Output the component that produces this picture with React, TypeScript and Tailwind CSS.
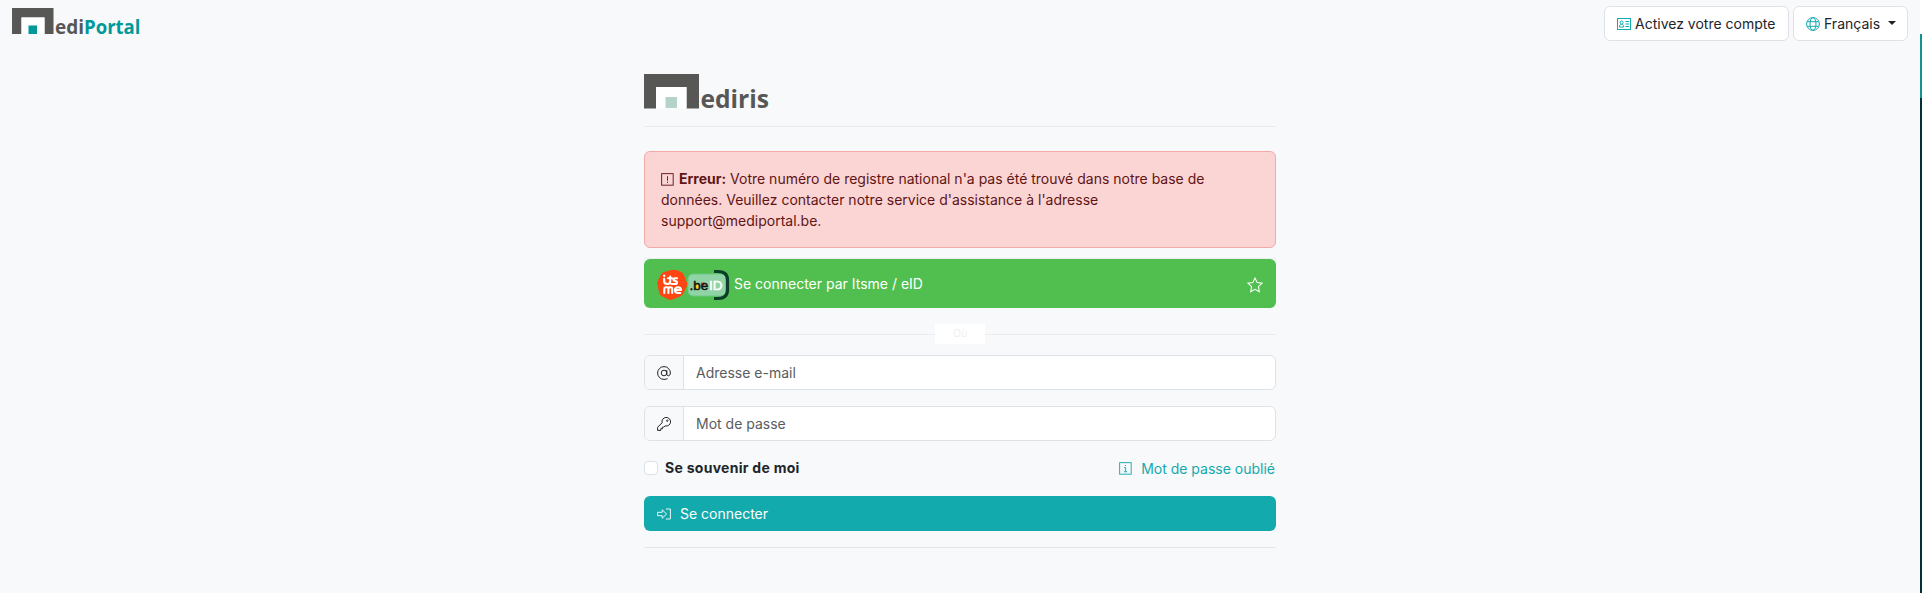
import type { ReactNode } from "react";

function Icon({ size = 14, className = "", children }: { size?: number; className?: string; children: ReactNode }) {
  return (
    <svg
      width={size}
      height={size}
      viewBox="0 0 14 14"
      fill="none"
      stroke="currentColor"
      strokeWidth="1"
      className={`shrink-0 ${className}`}
    >
      {children}
    </svg>
  );
}

function Navbar() {
  return (
    <header className="flex justify-between pl-3 pr-3 pt-1.5 h-[41px]">
      {/* Brand */}
      <svg width="130" height="32" viewBox="0 0 130 32" className="mt-0.5">
        <path d="M0 0H41.5V26H32.5V9.5H9.5V26H0Z" fill="#575756" />
        <path d="M9.5 9.5H32.5V26H9.5Z" fill="#fff" />
        <rect x="16.5" y="17.5" width="8.5" height="8.5" fill="#009999" />
        <g fontFamily="'Open Sans', 'Noto Sans', sans-serif" fontWeight="700" fontSize="18.8">
          <text x="43" y="26" fill="#575756" textLength="29" lengthAdjust="spacingAndGlyphs">
            edi
          </text>
          <text x="72" y="26" fill="#009999" textLength="56.5" lengthAdjust="spacingAndGlyphs">
            Portal
          </text>
        </g>
      </svg>

      <div className="flex gap-1">
        <button className="flex items-center h-[35px] w-[185px] pl-3 rounded-md border border-[#dee2e6] bg-white whitespace-nowrap">
          <Icon className="text-[#13aaad] mr-1">
            <rect x="0.5" y="1.5" width="13" height="11" />
            <path d="M2.5 10V8.7C2.5 8 3.3 7.5 4.5 7.5S6.7 8 6.7 8.7V10Z" />
            <circle cx="4.6" cy="5.5" r="1.5" />
            <path d="M8.5 4.5H12M8.5 7H12M8.5 9.5H12" />
          </Icon>
          Activez votre compte
        </button>
        <button className="flex items-center h-[35px] w-[115px] pl-3 rounded-md border border-[#dee2e6] bg-white whitespace-nowrap">
          <Icon className="text-[#13aaad] mr-1">
            <circle cx="7" cy="7" r="6.4" />
            <ellipse cx="7" cy="7" rx="3" ry="6.4" />
            <path d="M1.2 4.7H12.8M1.2 9.3H12.8" />
          </Icon>
          Français
          <span className="ml-2 -mt-0.5 border-x-4 border-t-4 border-x-transparent border-t-[#212529]" />
        </button>
      </div>
    </header>
  );
}

// Logos of the two identity providers
function ProviderLogos() {
  return (
    <svg width="75" height="32" viewBox="0 0 75 32" className="shrink-0 mr-0.5">
      <path
        d="M13 1.3Q17 0 20.5 1.3L25 3.6Q27 4.8 27.8 8L30 14Q30.8 16 29.5 18L26 25Q24.8 27 22 28L15.5 30.6Q13 31.4 10.5 30L4.5 27Q2.6 26 2 23L.3 15.5Q0 13 1.2 11L4 5.5Q5 3.5 8 2.8Z"
        fill="#ff4612"
      />
      <g stroke="#fff" strokeWidth="2.1" fill="none" strokeLinecap="round" strokeLinejoin="round">
        <path d="M7.2 9.8V12.5Q7.2 15 10.4 15Q13.2 15 13.2 12.5V7.5M11 9.3H15M20 9.2H18.2Q16.5 9.2 16.5 10.6Q16.5 12 18.3 12Q20 12 20 13.5Q20 15 18.2 15H14.5" />
        <path d="M7.3 24V20Q7.3 18.3 9 18.3H10Q11.4 18.3 11.4 20V24M11.4 20Q11.4 18.3 13 18.3Q15.2 18.3 15.2 20V24M18 21H24Q24 18.2 21 18.2Q18 18.2 18 21Q18 24 21 24H23.3" />
      </g>
      <circle cx="7.2" cy="6.8" r="1.2" fill="#fff" />

      <rect x="31" y="5" width="38" height="22" rx="5" fill="#8fd3a6" stroke="#6dc982" />
      <path d="M57 2.5H61Q70.5 2.5 70.5 11V21Q70.5 29.5 61 29.5H57" fill="none" stroke="#0b3d28" strokeWidth="3.2" />
      <rect x="37.5" y="14" width="4" height="6.5" fill="#ffd31a" />
      <rect x="44" y="13.5" width="3.5" height="3" fill="#e8342a" />
      <g fontFamily="'Liberation Sans', sans-serif" fontSize="13.5">
        <text x="32.5" y="21" fill="#111" stroke="#111" strokeWidth="0.5">
          .be
        </text>
        <text x="52" y="21" fill="#fff" stroke="#fff" strokeWidth="0.5">
          ID
        </text>
      </g>
    </svg>
  );
}

function Field({ icon, type, placeholder }: { icon: ReactNode; type: string; placeholder: string }) {
  return (
    <div className="flex h-[35px] mb-4 rounded-md border border-[#dee2e6] bg-white overflow-hidden">
      <span className="flex items-center justify-center w-[39px] border-r border-[#dee2e6] bg-[#f8f9fa]">
        {icon}
      </span>
      <input
        type={type}
        placeholder={placeholder}
        className="flex-1 px-3 outline-none placeholder:text-[#595c5f]"
      />
    </div>
  );
}

function LoginForm() {
  return (
    <main className="w-[632px] ml-[644px] pt-[33px]">
      <svg width="130" height="40" viewBox="0 0 130 40" className="block">
        <path d="M0 0H55V34.5H42.5V13H12V34.5H0Z" fill="#575756" />
        <path d="M12 13H42.5V34.5H12Z" fill="#fff" />
        <rect x="21.5" y="23" width="11.5" height="11" fill="#b5d3c9" />
        <text
          x="56.5"
          y="34.4"
          fontFamily="'Open Sans', 'Noto Sans', sans-serif"
          fontWeight="700"
          fontSize="25.5"
          fill="#575756"
          textLength="68.5"
          lengthAdjust="spacingAndGlyphs"
        >
          ediris
        </text>
      </svg>
      <hr className="mt-3 mb-6 border-[#ebecef]" />

      {/* Error message */}
      <div className="h-[97px] p-4 rounded-md border border-[#f4a9a9] bg-[#fbd4d4] text-[#5f1414]">
        <Icon size={13} className="inline-block mr-[5px] -mt-0.5">
          <rect x="0.7" y="0.7" width="12.4" height="12.4" />
          <path d="M7 3.5V8.3M7 9.5V10.8" />
        </Icon>
        <strong className="font-bold">Erreur:</strong> Votre numéro de registre national n'a pas été trouvé dans notre base de
        <br />
        données. Veuillez contacter notre service d'assistance à l'adresse
        <br />
        support@mediportal.be.
      </div>

      <hr className="mt-2.5 border-[#ebecef]" />
      <button className="flex items-center w-full h-[49px] px-[13px] pt-0.5 rounded-md bg-[#50bf50] text-white">
        <ProviderLogos />
        <span className="-mt-0.5">Se connecter par Itsme / eID</span>
        <Icon size={16} className="ml-auto">
          <path
            d="M7 .9L8.9 4.9L13.2 5.4L10 8.5L10.8 12.9L7 10.8L3.2 12.9L4 8.5L.8 5.4L5.1 4.9Z"
            strokeWidth="0.9"
          />
        </Icon>
      </button>

      {/* Separator */}
      <div className="flex items-center h-5 mt-4 mb-[11px]">
        <hr className="flex-1 border-[#ebecef]" />
        <span className="w-[50px] h-5 leading-5 text-center bg-white text-[10.5px] text-[#efefef]">Où</span>
        <hr className="flex-1 border-[#ebecef]" />
      </div>

      <Field
        type="email"
        placeholder="Adresse e-mail"
        icon={
          <Icon>
            <circle cx="7" cy="7" r="2.8" />
            <path d="M9.8 4V8.2Q9.8 9.8 11.5 9.8Q13.4 9.5 13.4 7A6.4 6.4 0 1 0 7 13.4Q9 13.4 10.5 12.6" />
          </Icon>
        }
      />
      <Field
        type="password"
        placeholder="Mot de passe"
        icon={
          <Icon>
            <path d="M5.1 5.8A4.3 4.3 0 1 1 8.2 8.9L6.8 10.1H5.4V11.7H3.8V13.4H.6V10.3Z" strokeLinejoin="round" />
            <circle cx="10.3" cy="3.7" r="0.7" />
          </Icon>
        }
      />

      <div className="flex items-start justify-between h-[39px]">
        <label className="flex items-center font-bold tracking-[0.28px]">
          <input
            type="checkbox"
            className="appearance-none w-3.5 h-3.5 mr-[7px] rounded border border-[#dee2e6] bg-white"
          />
          Se souvenir de moi
        </label>
        <a href="#" className="flex items-center mt-px mr-px text-[#13aaad]">
          <Icon size={13} className="mr-[9px]">
            <rect x="0.7" y="0.7" width="12.4" height="12.4" />
            <path d="M5.5 6H7.2V10.5M5.3 10.5H8.8M6.3 3.8H7.6" />
          </Icon>
          Mot de passe oublié
        </a>
      </div>

      <button className="flex items-center w-full h-[35px] px-[13px] rounded-md bg-[#13aaad] text-white">
        <Icon className="mr-[9px]">
          <path d="M.6 5.3H5.2V2.8L9.6 7L5.2 11.2V8.7H.6ZM9 2H13.4V12H9" strokeWidth="0.9" />
        </Icon>
        Se connecter
      </button>
      <hr className="mt-4 border-[#e3e5e8]" />
    </main>
  );
}

export default function App() {
  return (
    <div className="flex h-[593px] overflow-hidden bg-[#f8f9fb] text-[#212529] font-['Inter',sans-serif] text-[14px] leading-[21px]">
      <div className="flex-1">
        <Navbar />
        <LoginForm />
      </div>
      {/* Scroll strip */}
      <div className="w-0.5 pt-[34px] bg-white">
        <div className="h-16 bg-[#129391]" />
        <div className="h-[495px] bg-[#062f35]" />
      </div>
    </div>
  );
}
